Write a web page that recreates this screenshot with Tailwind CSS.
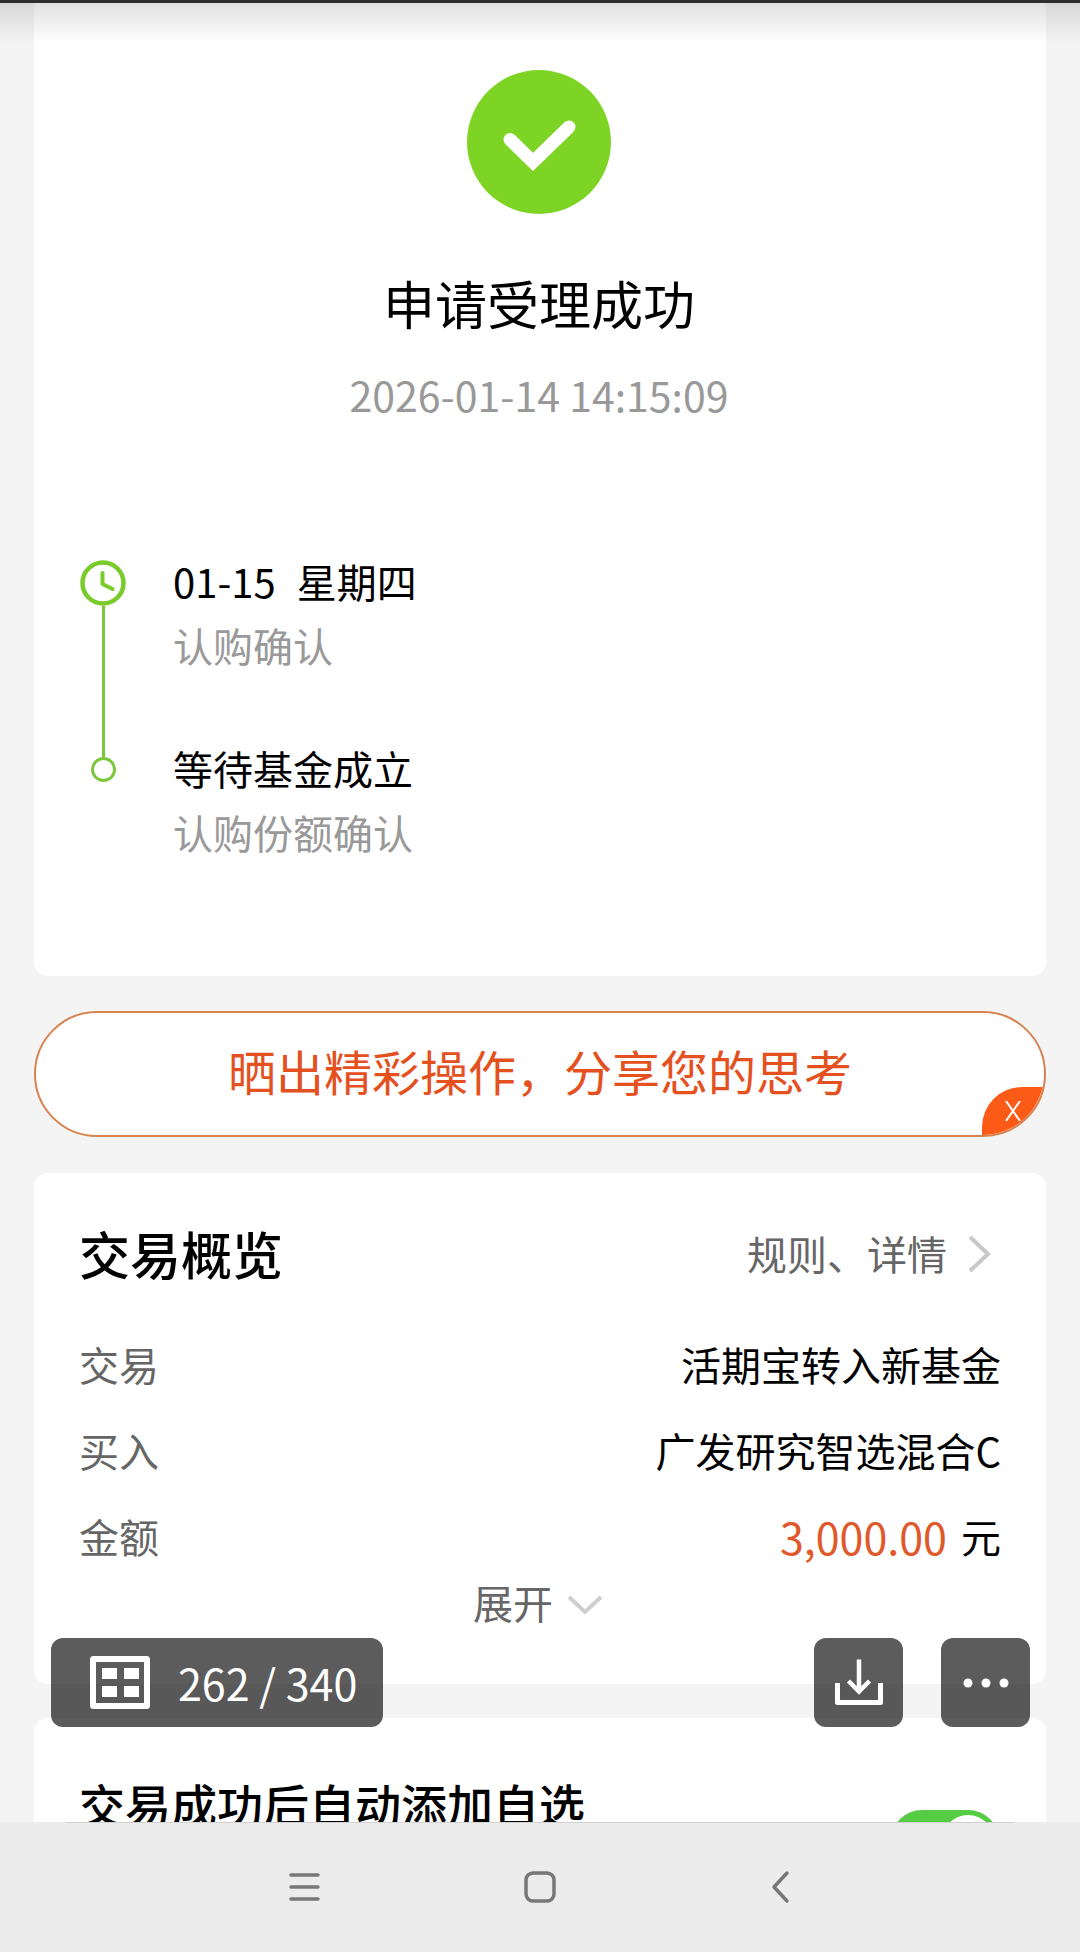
<!DOCTYPE html>
<html lang="zh-CN">
<head>
    <meta charset="UTF-8" />
    <meta name="viewport" content="width=device-width, initial-scale=1.0" />
    <title>交易结果</title>
    <script src="https://cdn.jsdelivr.net/npm/@tailwindcss/browser@4"></script>
</head>
<body
    class="flex h-screen flex-col overflow-hidden bg-[#f4f4f4] font-['Noto_Sans_CJK_SC',sans-serif] text-[40px] text-black"
>
    <main class="relative flex-1 overflow-hidden border-t-3 border-[#2e2e2e] px-[34px]">
        <!-- shadow under the status bar -->
        <div class="absolute inset-x-0 top-0 h-10 bg-linear-to-b from-black/12 to-transparent"></div>

        <!-- result -->
        <section class="rounded-b-[14px] bg-white px-[45px] pt-[67px] pb-[112px]">
            <div class="flex flex-col items-center pr-0.5">
                <svg class="size-36" viewBox="0 0 144 144" fill="none" aria-hidden="true">
                    <circle cx="72" cy="72" r="72" fill="#7ed424" />
                    <path
                        d="M43 69.500 66 92 102 57"
                        stroke="#fff"
                        stroke-width="13"
                        stroke-linecap="round"
                        stroke-linejoin="miter"
                    />
                </svg>
                <h1 class="mt-[59px] text-[52px] leading-[60px]">申请受理成功</h1>
                <p class="mt-9 text-[41px] leading-[50px] text-[#999]">2026-01-14 14:15:09</p>
            </div>

            <ol class="mt-[130px] leading-[64px]">
                <li class="flex gap-[46px]">
                    <div class="flex w-12 flex-col items-center pt-[11px]">
                        <svg class="size-[46px]" viewBox="0 0 46 46" fill="none" stroke="#7acb2c" aria-hidden="true">
                            <circle cx="23" cy="23" r="20.500" stroke-width="4.500" />
                            <path d="M22.500 13v11l10 5" stroke-width="4" stroke-linecap="round" stroke-linejoin="round" />
                        </svg>
                        <div class="w-[3px] flex-1 bg-[#7cc63c]"></div>
                    </div>
                    <div class="pb-[59px]">
                        <p class="flex gap-[21px]"><span>01-15</span><span>星期四</span></p>
                        <p class="text-[#999]">认购确认</p>
                    </div>
                </li>
                <li class="flex gap-[46px]">
                    <div class="flex w-12 flex-col items-center">
                        <div class="h-[21px] w-[3px] bg-[#7cc63c]"></div>
                        <div class="size-[25px] rounded-full border-3 border-[#7cc63c]"></div>
                    </div>
                    <div>
                        <p>等待基金成立</p>
                        <p class="text-[#999]">认购份额确认</p>
                    </div>
                </li>
            </ol>
        </section>

        <!-- share banner -->
        <div class="relative mt-[35px] h-[126px] overflow-hidden rounded-full border-2 border-[#d8824f] bg-white">
            <button type="button" class="h-full w-full pb-2 text-center text-[48px] text-[#e4511f]">
                晒出精彩操作，分享您的思考
            </button>
            <button
                type="button"
                aria-label="关闭"
                class="absolute right-0 bottom-0 flex h-12 w-[62px] items-center justify-center rounded-tl-[40px] bg-[#fb5a17]"
            >
                <svg class="h-5 w-4" viewBox="0 0 16 20" fill="none" stroke="#fff" stroke-width="2" aria-hidden="true">
                    <path d="M1 0 15 20M15 0 1 20" />
                </svg>
            </button>
        </div>

        <!-- overview -->
        <section class="mt-9 rounded-[14px] bg-white px-[45px] pt-12 pb-[59px]">
            <div class="flex items-center justify-between leading-[64px]">
                <h2 class="text-[51px] font-medium">交易概览</h2>
                <a href="#" class="flex items-center gap-5 pr-[10px] text-[#666]">
                    规则、详情
                    <svg class="h-10 w-6" viewBox="0 0 24 40" fill="none" stroke="#c8c8c8" stroke-width="4" aria-hidden="true">
                        <path d="M3 4 21 21 3 38" />
                    </svg>
                </a>
            </div>
            <dl class="mt-9 leading-[86px]">
                <div class="flex justify-between">
                    <dt class="text-[#666]">交易</dt>
                    <dd>活期宝转入新基金</dd>
                </div>
                <div class="flex justify-between">
                    <dt class="text-[#666]">买入</dt>
                    <dd>广发研究智选混合C</dd>
                </div>
                <div class="flex justify-between">
                    <dt class="text-[#666]">金额</dt>
                    <dd class="flex gap-[14px]"><span class="text-[43px] text-[#e0592b]">3,000.00</span>元</dd>
                </div>
            </dl>
            <button type="button" class="mx-auto flex items-center gap-[14px] pr-1 leading-[46px] text-[#666]">
                展开
                <svg class="h-6 w-9" viewBox="0 0 36 24" fill="none" stroke="#cfcfcf" stroke-width="4" aria-hidden="true">
                    <path d="M2 7 18 22 34 7" />
                </svg>
            </button>
        </section>

        <!-- auto favourite -->
        <section class="mt-[34px] flex items-start justify-between rounded-[14px] bg-white px-[45px] pt-[57px] pb-16">
            <label for="auto-add" class="text-[46px] leading-[56px] font-medium">交易成功后自动添加自选</label>
            <input
                id="auto-add"
                type="checkbox"
                role="switch"
                checked
                class="mt-[35px] mr-0.5 flex h-[62px] w-[108px] appearance-none justify-end rounded-full bg-[#55cc44] p-[5px] before:size-[52px] before:rounded-full before:bg-white"
            />
        </section>

        <!-- viewer toolbar -->
        <div class="absolute right-[50px] bottom-[95px] left-[51px] flex text-white">
            <button
                type="button"
                class="mr-auto flex h-[89px] items-center gap-7 rounded-xl bg-black/64 pr-[26px] pl-[39px] text-[43px]"
            >
                <svg class="h-[53px] w-[60px]" viewBox="0 0 60 53" fill="#fff" aria-hidden="true">
                    <rect x="3" y="3" width="54" height="47" rx="0.500" fill="none" stroke="#fff" stroke-width="6" stroke-linejoin="round" />
                    <path d="M12 12h15v11H12zM34 12h15v11H34zM12 30h15v11H12zM34 30h15v11H34z" />
                </svg>
                262 / 340
            </button>
            <button type="button" aria-label="下载" class="flex size-[89px] items-center justify-center rounded-xl bg-black/64">
                <svg class="size-12" viewBox="0 0 48 48" fill="none" stroke="#fff" aria-hidden="true">
                    <path d="M24 .500V33M13.500 22 24 32.500 34.500 22" stroke-width="4.500" />
                    <path d="M2.500 24v19.500h43V24" stroke-width="5" stroke-linejoin="round" />
                </svg>
            </button>
            <button type="button" aria-label="更多" class="ml-[38px] flex size-[89px] items-center justify-center rounded-xl bg-black/64">
                <svg class="h-3 w-12" viewBox="0 0 48 12" fill="#fff" aria-hidden="true">
                    <circle cx="6" cy="6" r="4.500" />
                    <circle cx="24" cy="6" r="4.500" />
                    <circle cx="42" cy="6" r="4.500" />
                </svg>
            </button>
        </div>
    </main>

    <!-- system navigation -->
    <nav class="bg-[#ececec] px-[66px]">
        <div class="flex h-[130px] items-center justify-center gap-[190px] border-t border-[#d0d0d0] pb-0.5">
            <button type="button" aria-label="菜单">
                <svg class="size-12" viewBox="0 0 48 48" fill="none" stroke="#777" stroke-width="3.500" stroke-linecap="round" aria-hidden="true">
                    <path d="M13 12h27M13 24h27M13 36h27" />
                </svg>
            </button>
            <button type="button" aria-label="主页">
                <svg class="size-12" viewBox="0 0 48 48" fill="none" stroke="#777" stroke-width="3.500" aria-hidden="true">
                    <rect x="10" y="10" width="28" height="28" rx="7" />
                </svg>
            </button>
            <button type="button" aria-label="返回">
                <svg class="size-12" viewBox="0 0 48 48" fill="none" stroke="#777" stroke-width="3.500" stroke-linecap="round" stroke-linejoin="round" aria-hidden="true">
                    <path d="M33 10 20 24l13 14" />
                </svg>
            </button>
        </div>
    </nav>
</body>
</html>
